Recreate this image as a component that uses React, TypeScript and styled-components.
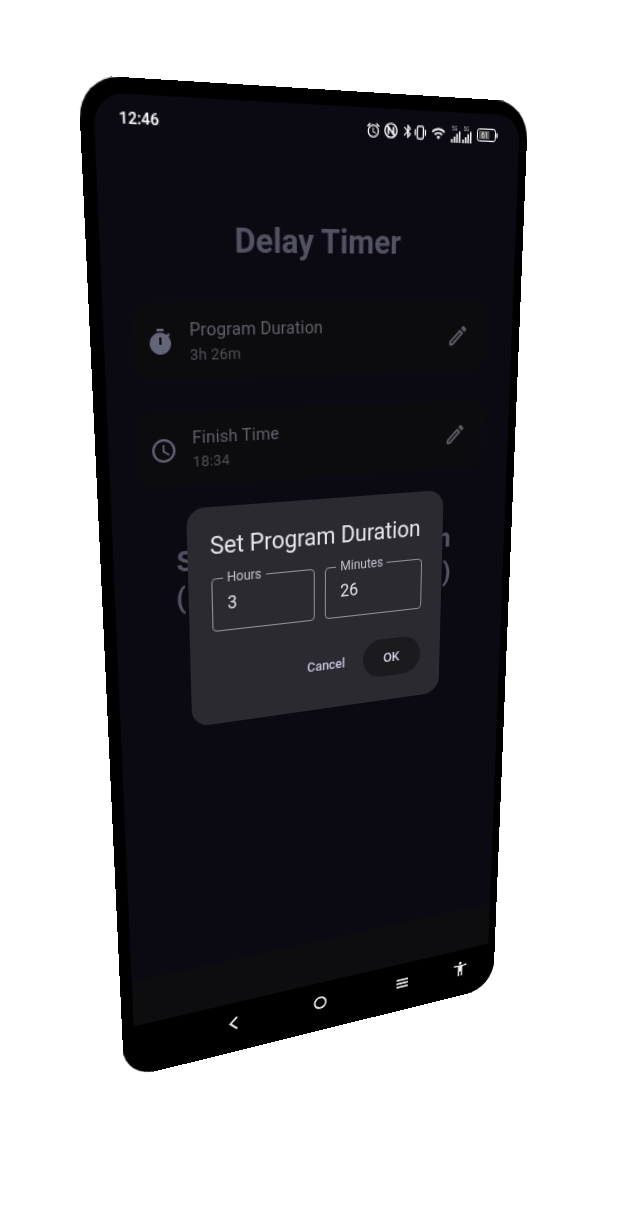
import React from "react";
import styled, { createGlobalStyle } from "styled-components";
import { MdOutlineEdit, MdAccessTime, MdAccessibilityNew, MdWifi, MdBluetooth, MdAlarm } from "react-icons/md";

const Global = createGlobalStyle`
  html, body { margin: 0; padding: 0; background: #fff; }
  body { font-family: Roboto, "Liberation Sans", sans-serif; overflow: hidden; }
`;

const Stage = styled.div`
  width: 640px;
  height: 1226px;
  overflow: hidden;
  background: #fff;
`;

const Phone = styled.div`
  position: relative;
  box-sizing: border-box;
  width: 400px;
  height: 888px;
  padding: 12px 8px 0 10.6px;
  background: #000;
  border-radius: 32px;
  overflow: hidden;
  display: flex;
  flex-direction: column;
  transform-origin: 0 0;
  transform: matrix3d(1.337, 0.109625, 0, 0.0003983, 0.08544, 1.41937, 0, 0.000267, 0, 0, 1, 0, 77.9, 74.4, 0, 1);
`;

const Screen = styled.div`
  flex: 1;
  display: flex;
  flex-direction: column;
  background: #0b0a13;
  border-radius: 24px 22px 0 0;
  overflow: hidden;
`;

const StatusBar = styled.div`
  height: 35px;
  flex: none;
  display: flex;
  align-items: center;
  padding: 0 22px 0 20px;
  color: #fff;
`;

const Clock = styled.span`
  font-size: 12.7px;
  font-weight: 500;
  margin-right: auto;
`;

const StatusIcons = styled.div`
  display: flex;
  align-items: center;
`;

const StatusItem = styled.div<{ $gap?: number }>`
  margin-left: ${(p) => p.$gap ?? 0}px;
  display: flex;
  align-items: center;
`;

const Title = styled.h1`
  margin: 58px 0 32px;
  text-align: center;
  font-size: 28.5px;
  line-height: 34px;
  font-weight: 700;
  color: #525262;
  padding-right: 2px;
`;

const Cards = styled.div`
  display: flex;
  flex-direction: column;
  gap: 27px;
  padding: 0 27px 0 24.4px;
`;

const Card = styled.div`
  height: 63px;
  display: flex;
  align-items: center;
  padding: 0 18px 0 11px;
  background: #0c0c0e;
  border-radius: 14px;
`;

const CardIcon = styled.div`
  width: 24px;
  height: 24px;
  flex: none;
  margin-right: 13px;
  color: #65657a;
  font-size: 24px;
  line-height: 0;
`;

const CardText = styled.div`
  flex: 1;
  display: flex;
  flex-direction: column;
  gap: 3px;
`;

const CardLabel = styled.div`
  font-size: 15px;
  line-height: 18px;
  letter-spacing: 0.15px;
  color: #60606c;
`;

const CardValue = styled.div`
  font-size: 13px;
  line-height: 17px;
  letter-spacing: 0.2px;
  color: #50505a;
`;

const EditIcon = styled(MdOutlineEdit)`
  flex: none;
  font-size: 23px;
  color: #5c5c66;
`;

const Info = styled.div`
  margin-top: 50px;
  padding-right: 3px;
  display: flex;
  flex-direction: column;
  align-items: center;
  font-size: 25.7px;
  line-height: 33px;
  font-weight: 700;
  color: #525262;
  white-space: nowrap;
`;

const InfoBracketed = styled.div`
  width: 270px;
  display: flex;
  justify-content: space-between;
`;

const Spacer = styled.div`
  flex: 1;
`;

const Band = styled.div`
  height: 47px;
  flex: none;
  background: #0d0d0f;
`;

const NavBar = styled.div`
  box-sizing: border-box;
  height: 54px;
  flex: none;
  display: flex;
  align-items: center;
  margin-right: -8px;
  margin-left: -10.6px;
  padding: 0 0 10px 99px;
  background: #000;
  color: #f0f0f0;
`;

const NavSlot = styled.div<{ $gap?: number }>`
  width: 20px;
  height: 20px;
  margin-left: ${(p) => p.$gap ?? 0}px;
  display: flex;
  align-items: center;
  justify-content: center;
`;

const Overlay = styled.div`
  position: absolute;
  inset: 0;
  display: flex;
  align-items: center;
  justify-content: center;
  pointer-events: none;
`;

const Dialog = styled.div`
  box-sizing: border-box;
  width: 249px;
  height: 200px;
  padding: 21px 21px 24px 21px;
  background: #2b2a31;
  border-radius: 16px;
  display: flex;
  flex-direction: column;
`;

const DialogTitle = styled.div`
  font-size: 21.5px;
  line-height: 28px;
  color: #e8e7ec;
  white-space: nowrap;
`;

const Fields = styled.div`
  display: flex;
  gap: 10.5px;
  margin-top: 9px;
`;

const Field = styled.fieldset`
  flex: 1;
  box-sizing: border-box;
  height: 55px;
  margin: 0;
  padding: 0 0 0 14px;
  min-width: 0;
  border: 1px solid #93929a;
  border-radius: 4px;
  display: flex;
  align-items: center;
`;

const FieldLabel = styled.legend`
  margin-left: -4px;
  padding: 0 4px;
  font-size: 12px;
  line-height: 12px;
  color: #c3c2ca;
`;

const FieldValue = styled.div`
  font-size: 16px;
  line-height: 20px;
  color: #e6e5ea;
  margin-top: -6px;
`;

const Actions = styled.div`
  display: flex;
  align-items: center;
  justify-content: flex-end;
  gap: 18px;
  margin-top: auto;
`;

const TextButton = styled.div`
  font-size: 12.5px;
  font-weight: 500;
  margin-bottom: 1px;
  color: #c8c5dc;
`;

const PillButton = styled.div`
  width: 60px;
  height: 37px;
  display: flex;
  align-items: center;
  justify-content: center;
  border-radius: 19px;
  background: #1b1a1f;
  font-size: 13px;
  font-weight: 500;
  color: #d6d4e8;
`;

const Tiny = styled.svg`
  display: block;
  flex: none;
`;

const TimerIcon = () => (
  <svg width="24" height="24" viewBox="0 0 24 24" fill="currentColor">
    <path d="M9 1h6v2H9z" />
    <path d="M19.03 7.39l1.42-1.42a11 11 0 0 0-1.41-1.41l-1.42 1.42A9 9 0 1 0 19.03 7.39z" />
    <path d="M11 8h2v6h-2z" fill="#0c0c0e" />
  </svg>
);

const NfcIcon = () => (
  <Tiny width="13" height="13" viewBox="0 0 13 13" fill="none" stroke="#fff">
    <circle cx="6.5" cy="6.5" r="5.6" strokeWidth="1.4" />
    <path d="M4.2 9.6V3.6l4.6 5.8V3.4" strokeWidth="1.5" />
    <path d="M2.6 2.6l7.8 7.8" strokeWidth="0.9" />
  </Tiny>
);

const VibrateIcon = () => (
  <Tiny width="13" height="12" viewBox="0 0 13 12" fill="none" stroke="#fff" strokeWidth="1.2">
    <rect x="3.6" y="0.8" width="5.8" height="10.4" rx="1.4" />
    <path d="M1.6 3.6v4.8M11.4 3.6v4.8" />
  </Tiny>
);

const SignalLabel = styled.text`
  font-family: Roboto, sans-serif;
  font-size: 4.5px;
  fill: #b8b8b8;
`;

const SignalIcon = () => (
  <Tiny width="22" height="16" viewBox="0 0 22 16" fill="#fff">
    <SignalLabel x="1" y="4.6">5G</SignalLabel>
    <SignalLabel x="12.5" y="4.6">5G</SignalLabel>
    <rect x="0.5" y="12" width="1.5" height="3" />
    <rect x="3" y="10" width="1.5" height="5" />
    <rect x="5.5" y="7.5" width="1.5" height="7.5" />
    <rect x="8" y="5.5" width="1.5" height="9.5" />
    <rect x="11.5" y="12" width="1.5" height="3" />
    <rect x="14" y="10" width="1.5" height="5" />
    <rect x="16.5" y="7.5" width="1.5" height="7.5" />
    <rect x="19" y="5.5" width="1.5" height="9.5" />
  </Tiny>
);

const BatteryText = styled.text`
  font-family: Roboto, sans-serif;
  font-size: 6.5px;
  fill: #e8e8e8;
`;

const BatteryIcon = () => (
  <Tiny width="21" height="11" viewBox="0 0 21 11">
    <rect x="0.5" y="0.5" width="18" height="10" rx="2" fill="none" stroke="#fff" />
    <rect x="2" y="2" width="10.5" height="7" fill="#555" />
    <rect x="19.4" y="3.5" width="1.4" height="4" fill="#fff" />
    <BatteryText x="4.2" y="8">61</BatteryText>
  </Tiny>
);

export default function App() {
  return (
    <Stage>
      <Global />
      <Phone>
        <Screen>
          <StatusBar>
            <Clock>12:46</Clock>
            <StatusIcons>
              <StatusItem><MdAlarm size={14} /></StatusItem>
              <StatusItem $gap={2.4}><NfcIcon /></StatusItem>
              <StatusItem $gap={3}><MdBluetooth size={13} /></StatusItem>
              <StatusItem $gap={-1}><VibrateIcon /></StatusItem>
              <StatusItem $gap={4.5}><MdWifi size={14} /></StatusItem>
              <StatusItem $gap={4.5}><SignalIcon /></StatusItem>
              <StatusItem $gap={4.5}><BatteryIcon /></StatusItem>
            </StatusIcons>
          </StatusBar>
          <Title>Delay Timer</Title>
          <Cards>
            <Card>
              <CardIcon><TimerIcon /></CardIcon>
              <CardText>
                <CardLabel>Program Duration</CardLabel>
                <CardValue>3h 26m</CardValue>
              </CardText>
              <EditIcon />
            </Card>
            <Card>
              <CardIcon><MdAccessTime /></CardIcon>
              <CardText>
                <CardLabel>Finish Time</CardLabel>
                <CardValue>18:34</CardValue>
              </CardText>
              <EditIcon />
            </Card>
          </Cards>
          <Info>
            <span>Start Program Duration</span>
            <InfoBracketed>
              <span>(</span>
              <span>2h 22m from 12:46</span>
              <span>)</span>
            </InfoBracketed>
          </Info>
          <Spacer />
          <Band />
        </Screen>
        <NavBar>
          <NavSlot>
            <svg width="13" height="17" viewBox="0 0 13 17" fill="none" stroke="currentColor" strokeWidth="2">
              <path d="M10 2L3 8.5l7 6.5" />
            </svg>
          </NavSlot>
          <NavSlot $gap={71}>
            <svg width="15" height="15" viewBox="0 0 15 15" fill="none" stroke="currentColor" strokeWidth="1.8">
              <circle cx="7.5" cy="7.5" r="6" />
            </svg>
          </NavSlot>
          <NavSlot $gap={71}>
            <svg width="15" height="13" viewBox="0 0 15 13" fill="none" stroke="currentColor" strokeWidth="1.8">
              <path d="M1 2.5h13M1 6.5h13M1 10.5h13" />
            </svg>
          </NavSlot>
          <NavSlot $gap={48}>
            <MdAccessibilityNew size={20} />
          </NavSlot>
        </NavBar>
        <Overlay>
          <Dialog>
            <DialogTitle>Set Program Duration</DialogTitle>
            <Fields>
              <Field>
                <FieldLabel>Hours</FieldLabel>
                <FieldValue>3</FieldValue>
              </Field>
              <Field>
                <FieldLabel>Minutes</FieldLabel>
                <FieldValue>26</FieldValue>
              </Field>
            </Fields>
            <Actions>
              <TextButton>Cancel</TextButton>
              <PillButton>OK</PillButton>
            </Actions>
          </Dialog>
        </Overlay>
      </Phone>
    </Stage>
  );
}
